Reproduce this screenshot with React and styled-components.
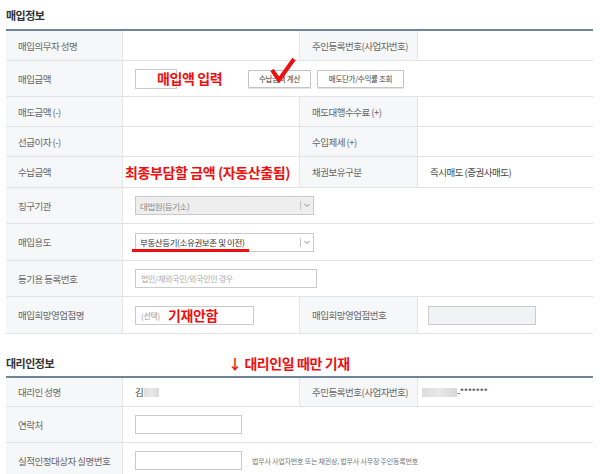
import React from 'react';
import styled, { createGlobalStyle } from 'styled-components';

const GlobalStyle = createGlobalStyle`
  html, body {
    margin: 0;
    padding: 0;
    background: #fff;
  }
  body {
    font-family: "Noto Sans CJK KR", "Noto Sans", sans-serif;
    color: #555;
  }
`;

const Page = styled.div`
  width: 600px;
  height: 474px;
  overflow: hidden;
  padding: 0 7px 0 6px;
  box-sizing: border-box;
`;

const SectionHead = styled.div`
  display: grid;
  grid-template-columns: 222px 1fr;
  align-items: center;
  height: ${(p) => p.$h}px;
  padding-top: ${(p) => p.$top}px;
  box-sizing: border-box;
`;

const SectionTitle = styled.h2`
  margin: 0;
  font-size: 11px;
  line-height: 14px;
  font-weight: 700;
  letter-spacing: -0.5px;
  color: #333;
`;

const Remark = styled.span`
  font-size: 14px;
  line-height: 16px;
  font-weight: 700;
  color: #ee1010;
  white-space: nowrap;
  letter-spacing: -0.4px;
`;

const Table = styled.div`
  border-top: 2px solid #6f8399;
`;

const Row = styled.div`
  display: grid;
  grid-template-columns: 117px 176px 119px 175px;
  height: ${(p) => p.$h}px;
  border-bottom: 1px solid #e3e3e3;
  box-sizing: border-box;
`;

const Label = styled.div`
  display: flex;
  align-items: center;
  padding-left: 12px;
  background: #f6f7f9;
  border-right: 1px solid #e6e6e6;
  border-left: ${(p) => (p.$side ? '1px solid #e6e6e6' : 'none')};
  font-size: 9.5px;
  letter-spacing: -0.5px;
  color: #666;
  white-space: nowrap;
`;

const Value = styled.div`
  position: relative;
  display: flex;
  align-items: center;
  gap: ${(p) => p.$gap || 0}px;
  grid-column: span ${(p) => p.$span || 1};
  padding-left: ${(p) => (p.$pad === undefined ? 12 : p.$pad)}px;
  font-size: 9.5px;
  letter-spacing: -0.5px;
  color: #444;
  white-space: nowrap;
`;

const Field = styled.div`
  display: flex;
  align-items: center;
  width: ${(p) => p.$w}px;
  height: ${(p) => p.$h || 19}px;
  border: 1px solid #cacaca;
  background: ${(p) => (p.$muted ? '#f0f2f5' : '#fff')};
  box-sizing: border-box;
  padding-left: 5px;
  font-size: 8px;
  color: #aaa;
  letter-spacing: -0.3px;
  flex-shrink: 0;
`;

const Button = styled.button`
  height: 18px;
  width: ${(p) => p.$w}px;
  margin-left: ${(p) => p.$ml || 0}px;
  padding: 0;
  border: 1px solid #c4c4c4;
  border-radius: 1px;
  background: #fff;
  box-shadow: 0 1px 0 #e4e4e4;
  font-family: inherit;
  font-size: 7.5px;
  letter-spacing: -0.3px;
  color: #444;
`;

const SelectBox = styled.div`
  display: flex;
  align-items: center;
  width: 179px;
  height: 19px;
  border: 1px solid #cacaca;
  box-sizing: border-box;
  background: ${(p) => (p.$disabled ? '#eeeeee' : '#fff')};
  color: ${(p) => (p.$disabled ? '#888' : '#333')};
  font-size: 8.5px;
  letter-spacing: -0.4px;
`;

const SelectText = styled.span`
  flex: 1;
  padding-left: 4px;
`;

const SelectDivider = styled.span`
  width: 1px;
  height: 9px;
  background: #c4c4c4;
`;

const Underline = styled.span`
  position: absolute;
  left: 9px;
  top: 25px;
  width: 117px;
  height: 3px;
  background: #ee1010;
`;

const FloatNote = styled(Remark)`
  position: absolute;
  left: 34px;
  top: 9px;
`;

const CheckMark = styled.svg`
  position: absolute;
  left: 146px;
  top: -4px;
`;

const Masked = styled.span`
  display: inline-block;
  width: ${(p) => p.$w}px;
  height: 9px;
  background: linear-gradient(90deg, #dcdcdc, #e8e8e8 50%, #d8d8d8);
  margin-left: ${(p) => p.$ml || 0}px;
`;

const Hint = styled.span`
  font-size: 7px;
  letter-spacing: -0.2px;
  color: #777;
`;

const Placeholder = styled.span`
  color: #999;
`;

const Chevron = () => (
  <svg width="12" height="17" viewBox="0 0 12 17">
    <path d="M3.5 7 L6 9.5 L8.5 7" fill="none" stroke="#888" strokeWidth="1" />
  </svg>
);

function Select({ children, disabled }) {
  return (
    <SelectBox $disabled={disabled}>
      <SelectText>{children}</SelectText>
      <SelectDivider />
      <Chevron />
    </SelectBox>
  );
}

export default function App() {
  return (
    <Page>
      <GlobalStyle />
      <SectionHead $h={29} $top={0}>
        <SectionTitle>매입정보</SectionTitle>
      </SectionHead>
      <Table>
        <Row $h={30}>
          <Label>매입의무자 성명</Label>
          <Value />
          <Label $side>주인등록번호(사업자번호)</Label>
          <Value />
        </Row>
        <Row $h={36}>
          <Label>매입금액</Label>
          <Value $span={3} $gap={6}>
            <Field $w={42} $h={20} />
            <Button $w={63} $ml={65}>수납금액 계산</Button>
            <Button $w={87}>매도단가/수익률 조회</Button>
            <FloatNote>매입액 입력</FloatNote>
            <CheckMark width="28" height="26" viewBox="0 0 28 26">
              <path
                d="M3 13 L10 23 L25 2"
                fill="none"
                stroke="#ee1010"
                strokeWidth="4"
                strokeLinejoin="miter"
              />
            </CheckMark>
          </Value>
        </Row>
        <Row $h={30}>
          <Label>매도금액 (-)</Label>
          <Value />
          <Label $side>매도대행수수료 (+)</Label>
          <Value />
        </Row>
        <Row $h={30}>
          <Label>선급이자 (-)</Label>
          <Value />
          <Label $side>수입제세 (+)</Label>
          <Value />
        </Row>
        <Row $h={31}>
          <Label>수납금액</Label>
          <Value $pad={2}>
            <Remark>최종부담할 금액 (자동산출됨)</Remark>
          </Value>
          <Label $side>채권보유구분</Label>
          <Value>즉시매도 (증권사매도)</Value>
        </Row>
        <Row $h={36}>
          <Label>징구기관</Label>
          <Value $span={3}>
            <Select disabled>대법원(등기소)</Select>
          </Value>
        </Row>
        <Row $h={37}>
          <Label>매입용도</Label>
          <Value $span={3}>
            <Select>부동산등기(소유권보존 및 이전)</Select>
            <Underline />
          </Value>
        </Row>
        <Row $h={36}>
          <Label>등기용 등록번호</Label>
          <Value $span={3}>
            <Field $w={182}>법인/재외국민/외국인인 경우</Field>
          </Value>
        </Row>
        <Row $h={37}>
          <Label>매입희망영업점명</Label>
          <Value>
            <Field $w={119}>
              <Placeholder>(선택)</Placeholder>
              <Remark style={{ marginLeft: 8 }}>기재안함</Remark>
            </Field>
          </Value>
          <Label $side>매입희망영업점번호</Label>
          <Value $pad={10}>
            <Field $w={108} $muted />
          </Value>
        </Row>
      </Table>

      <SectionHead $h={42} $top={16}>
        <SectionTitle>대리인정보</SectionTitle>
        <Remark>↓ 대리인일 때만 기재</Remark>
      </SectionHead>
      <Table>
        <Row $h={29}>
          <Label>대리인 성명</Label>
          <Value>
            김<Masked $w={15} $ml={1} />
          </Value>
          <Label $side>주민등록번호(사업자번호)</Label>
          <Value $pad={4}>
            <Masked $w={35} />
            -*******
          </Value>
        </Row>
        <Row $h={36}>
          <Label>연락처</Label>
          <Value $span={3}>
            <Field $w={107} />
          </Value>
        </Row>
        <Row $h={36}>
          <Label>실적인정대상자 실명번호</Label>
          <Value $span={3} $gap={10}>
            <Field $w={107} />
            <Hint>법무사 사업자번호 또는 채권상, 법무사 사무장 주인등록번호</Hint>
          </Value>
        </Row>
      </Table>
    </Page>
  );
}
